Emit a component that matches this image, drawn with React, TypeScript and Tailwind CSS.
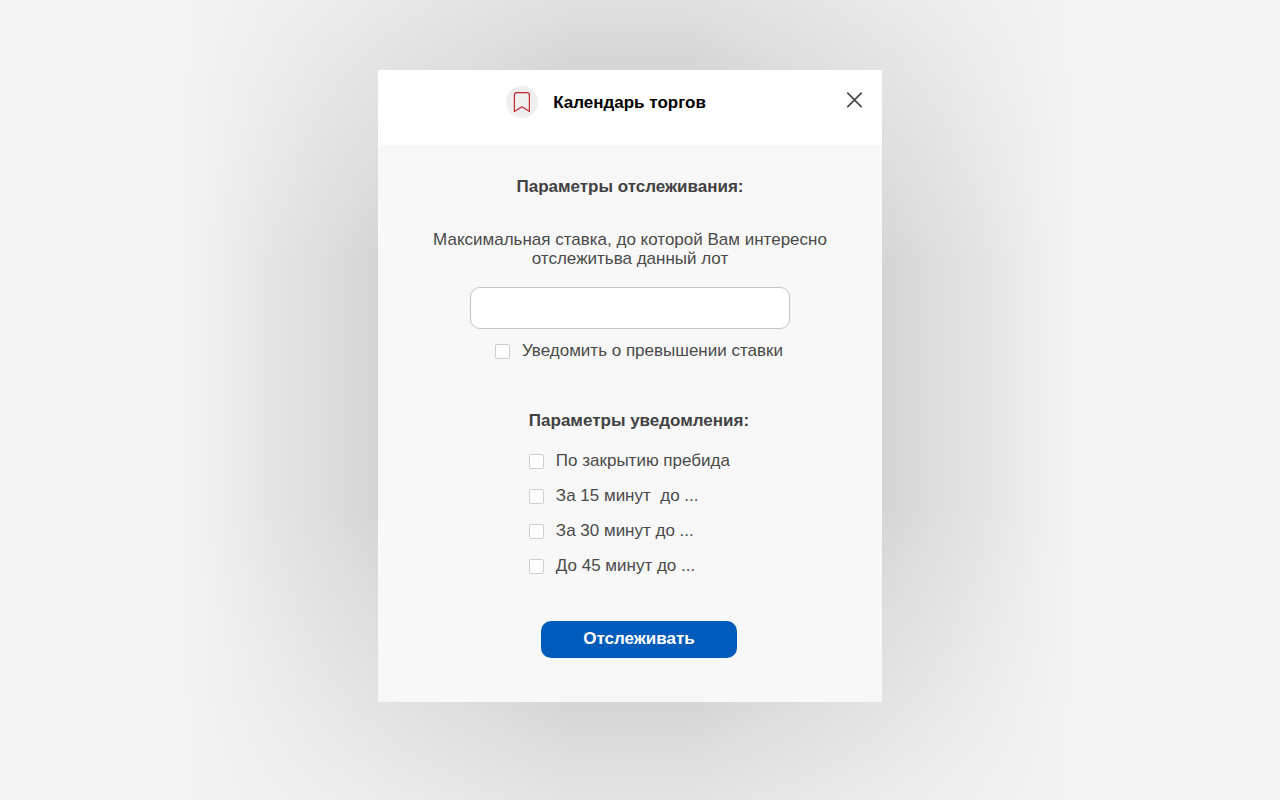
import React from "react";

interface CheckItemProps {
  id: string;
  label: string;
}

const notifications: CheckItemProps[] = [
  { id: "prebid", label: "По закрытию пребида" },
  { id: "min15", label: "За 15 минут  до ..." },
  { id: "min30", label: "За 30 минут до ..." },
  { id: "min45", label: "До 45 минут до ..." },
];

const CheckItem: React.FC<CheckItemProps> = ({ id, label }) => {
  return (
    <div className="flex items-center gap-3">
      <input
        id={id}
        type="checkbox"
        className="size-[15px] shrink-0 appearance-none rounded-xs border border-[#cfcfcf] bg-white checked:bg-[#005bbb]"
      />
      <label htmlFor={id} className="whitespace-pre">
        {label}
      </label>
    </div>
  );
};

const ModalHeader: React.FC = () => {
  return (
    <header className="flex h-[75px] items-start bg-white px-4 pt-4">
      <div className="flex flex-1 items-center justify-center gap-[15px]">
        <span className="flex size-8 items-center justify-center rounded-full bg-[#efefef]">
          <svg
            width="18"
            height="22"
            viewBox="0 0 18 22"
            fill="none"
            stroke="#c1272d"
            strokeWidth="1.2"
            strokeLinejoin="round"
          >
            <path d="M1.4 20.4V4Q1.4 1.6 3.8 1.6H14Q16.4 1.6 16.4 4V20.4L8.9 15.8Z" />
          </svg>
        </span>
        <h1 id="modal-title" className="pt-0.5 font-bold text-black">
          Календарь торгов
        </h1>
      </div>
      <button
        type="button"
        aria-label="Закрыть"
        className="mt-0.5 ml-6 flex size-6 items-center justify-center"
      >
        <svg
          width="18"
          height="18"
          viewBox="0 0 18 18"
          fill="none"
          stroke="#4a4a4a"
          strokeWidth="1.8"
          strokeLinecap="round"
        >
          <path d="M2.8 2.2L16.2 15.6M16.2 2.2L2.8 15.6" />
        </svg>
      </button>
    </header>
  );
};

const App: React.FC = () => {
  return (
    <main className="flex min-h-screen items-start justify-center overflow-hidden bg-[#f4f4f4] pt-[70px] pr-5 font-['Liberation_Sans',Arial,sans-serif] text-[17px] leading-5 text-[#4a4a4a]">
      <div className="relative isolate w-full max-w-[504px]">
        {/* wide soft shadow around the modal */}
        <div className="absolute -inset-[195px] -z-10 bg-[linear-gradient(to_right,transparent,rgba(0,0,0,0.25)_390px,rgba(0,0,0,0.25)_calc(100%-390px),transparent)] mask-[linear-gradient(to_bottom,transparent,black_390px,black_calc(100%-390px),transparent)]" />

        <form aria-labelledby="modal-title" className="bg-[#f8f8f8]">
          <ModalHeader />

          <section className="flex flex-col items-center px-10 pt-8">
            <h2 className="font-bold text-[#424143]">
              Параметры отслеживания:
            </h2>
            <label
              htmlFor="max-bid"
              className="mt-[33px] text-center leading-[19px]"
            >
              Максимальная ставка, до которой Вам интересно отслежитьва данный
              лот
            </label>
            <input
              id="max-bid"
              type="text"
              className="mt-[19px] h-[42px] w-full max-w-80 rounded-[10px] border border-[#c4c4c4] bg-white px-3"
            />
          </section>

          <section className="flex flex-col items-center pt-3 pb-11 pl-[18px]">
            <CheckItem id="exceed" label="Уведомить о превышении ставки" />
            <div className="mt-[50px]">
              <h2 className="font-bold text-[#424143]">
                Параметры уведомления:
              </h2>
              <div className="mt-5 flex flex-col gap-[15px]">
                {notifications.map((item) => (
                  <CheckItem key={item.id} id={item.id} label={item.label} />
                ))}
              </div>
            </div>
            <button
              type="button"
              className="mt-[45px] h-[37px] w-49 rounded-[10px] bg-[#005bbb] pb-0.5 font-bold text-white"
            >
              Отслеживать
            </button>
          </section>
        </form>
      </div>
    </main>
  );
};

export default App;
